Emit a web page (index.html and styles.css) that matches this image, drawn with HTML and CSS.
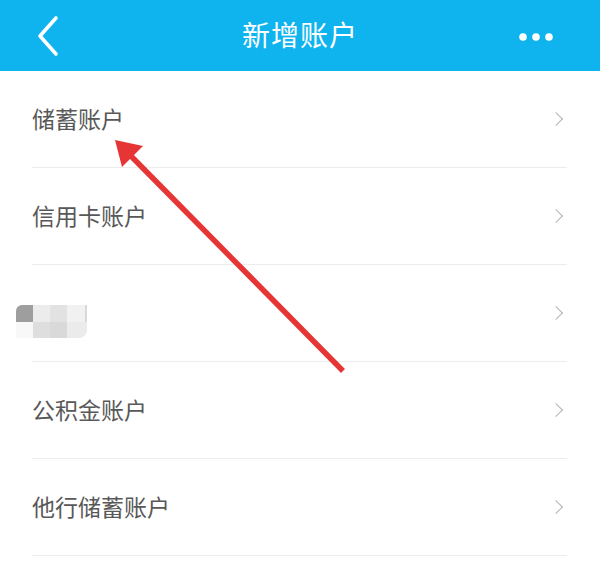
FILE: index.html
```html
<!DOCTYPE html>
<html lang="zh">
<head>
<meta charset="utf-8">
<link rel="stylesheet" href="styles.css">
</head>
<body>
<div class="page">
  <header class="nav">
    <svg class="back" width="30" height="44" viewBox="0 0 30 44"><polyline points="24,4 8,22 24,40" fill="none" stroke="#fff" stroke-width="3.6" stroke-linecap="round" stroke-linejoin="round"/></svg>
    <h1 class="title">新增账户</h1>
    <svg class="more" width="36" height="10" viewBox="0 0 36 10"><circle cx="5" cy="5" r="3.8" fill="#fff"/><circle cx="18" cy="5" r="3.8" fill="#fff"/><circle cx="31" cy="5" r="3.8" fill="#fff"/></svg>
  </header>
  <ul class="list">
    <li class="row"><span class="label">储蓄账户</span><span class="chev"></span></li>
    <li class="row"><span class="label">信用卡账户</span><span class="chev"></span></li>
    <li class="row">
      <div class="mosaic">
        <i class="m1"></i><i class="m2"></i><i class="m3"></i><i class="m4"></i>
        <i class="m5"></i><i class="m6"></i><i class="m7"></i><i class="m8"></i>
      </div>
      <span class="chev"></span>
    </li>
    <li class="row"><span class="label">公积金账户</span><span class="chev"></span></li>
    <li class="row"><span class="label">他行储蓄账户</span><span class="chev"></span></li>
  </ul>
  <svg class="arrow" width="600" height="577" viewBox="0 0 600 577">
    <line x1="343" y1="371" x2="128" y2="153" stroke="#e53535" stroke-width="5.5" stroke-linecap="butt"/>
    <polygon points="115,140 143,146 122,167" fill="#e53535"/>
  </svg>
</div>
</body>
</html>
```
FILE: styles.css
```css
* { box-sizing: border-box; }
html, body { margin: 0; padding: 0; background: #fff; }
body { font-family: "Noto Sans CJK SC", "Noto Sans", sans-serif; }
.page { position: relative; width: 600px; height: 577px; overflow: hidden; }
.nav {
  height: 71px;
  background: #0fb4ef;
  display: flex;
  align-items: center;
  justify-content: space-between;
  padding: 0 46px 0 32px;
}
.back { display: block; }
.title {
  margin: 0;
  color: #fff;
  font-size: 28px;
  font-weight: 400;
  letter-spacing: 1px;
  position: absolute;
  left: 0; right: 0;
  top: 14px;
  text-align: center;
  line-height: 40px;
  pointer-events: none;
}
.more { display: block; margin-top: 2px; }
.list { list-style: none; margin: 0; padding: 0 33px 0 32px; }
.row {
  height: 97px;
  border-bottom: 1.5px solid #ececec;
  display: flex;
  align-items: center;
  justify-content: space-between;
}
.label {
  font-size: 23px;
  color: #585858;
  line-height: 1;
  margin-top: -2px;
}
.chev {
  width: 10px; height: 10px;
  border-top: 1.6px solid #b3b3b3;
  border-right: 1.6px solid #b3b3b3;
  transform: rotate(45deg);
  margin-right: 6px;
}
.mosaic {
  margin-left: -16px;
  display: grid;
  grid-template-columns: 17px 17px 17px 20px;
  grid-template-rows: 17px 16px;
  margin-top: 16px;
}
.mosaic i { display: block; }
.m1 { background: #9e9e9e; border-radius: 6px 0 0 0; }
.m2 { background: #ececec; }
.m3 { background: #e2e2e2; }
.m4 { background: #f1f1f1; border-right: 2px solid #d8d8d8; }
.m5 { background: #f8f8f8; }
.m6 { background: #dedede; }
.m7 { background: #d9d9d9; }
.m8 { background: #ebebeb; border-radius: 0 0 8px 0; }
.arrow { position: absolute; left: 0; top: 0; pointer-events: none; }
```
